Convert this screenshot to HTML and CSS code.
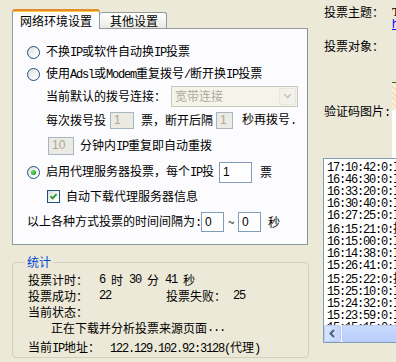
FILE: index.html
```html
<!DOCTYPE html>
<html lang="zh-CN">
<head>
<meta charset="utf-8">
<title>投票设置</title>
<link rel="stylesheet" href="styles.css">
</head>
<body>
<div class="app">
  <div class="left">
    <div class="tabs">
      <div class="tab active">网络环境设置</div>
      <div class="tab">其他设置</div>
    </div>
    <div class="panel">
      <div class="row r1"><span class="radio"></span><span class="lbl">不换<span class="en">IP</span>或软件自动换<span class="en">IP</span>投票</span></div>
      <div class="row r2"><span class="radio"></span><span class="lbl">使用<span class="en">Adsl</span>或<span class="en">Modem</span>重复拨号<span class="en">/</span>断开换<span class="en">IP</span>投票</span></div>
      <div class="row r3 ind"><span>当前默认的拨号连接：</span>
        <div class="select dis"><span class="sel-text">宽带连接</span><span class="sel-btn"><svg width="9" height="6" viewBox="0 0 9 6"><path d="M1 1 L4.5 4.5 L8 1" fill="none" stroke="#C9C7BA" stroke-width="1.6"/></svg></span></div>
      </div>
      <div class="row r4 ind"><span>每次拨号投</span><span class="inp dis w24">1</span><span class="t1">票，断开后隔</span><span class="inp dis w17">1</span><span class="t2">秒再拨号<span class="en">.</span></span></div>
      <div class="row r5"><span class="inp dis w26 h18">10</span><span class="t3">分钟内<span class="en">IP</span>重复即自动重拨</span></div>
      <div class="row r6"><span class="radio on"></span><span class="lbl">启用代理服务器投票，每个<span class="en">IP</span>投</span><span class="inp w33 h21">1</span><span class="t4">票</span></div>
      <div class="row r7"><span class="check"><svg width="11" height="11" viewBox="0 0 11 11"><path d="M2.5 5.2 L4.6 7.4 L8.6 3.2" fill="none" stroke="#21A121" stroke-width="1.9"/></svg></span><span class="lbl2">自动下载代理服务器信息</span></div>
      <div class="row r8"><span>以上各种方式投票的时间间隔为<span class="en">:</span></span><span class="inp w23 h20">0</span><span class="tilde">~</span><span class="inp w23 h20">0</span><span class="t5">秒</span></div>
    </div>
    <fieldset class="group">
      <legend>统计</legend>
      <div class="srow"><span class="sl">投票计时：</span><span class="sv timer"><span class="en">6</span><span>时</span><span class="en">30</span><span>分</span><span class="en">41</span><span>秒</span></span></div>
      <div class="srow"><span class="sl">投票成功：</span><span class="sv n1 en">22</span><span class="sl fail">投票失败：</span><span class="n2 en">25</span></div>
      <div class="srow"><span class="sl">当前状态：</span></div>
      <div class="srow status">正在下载并分析投票来源页面<span class="en">...</span></div>
      <div class="srow ip"><span class="sl ipl">当前<span class="en">IP</span>地址：</span><span class="ipv"><span class="en">122.129.102.92:3128(</span>代理<span class="en">)</span></span></div>
    </fieldset>
  </div>
  <div class="right">
    <div class="field subject">
      <span class="rl">投票主题：</span>
      <div class="rv"><div class="title">T</div><a class="link" href="#">h</a></div>
    </div>
    <div class="field target"><span class="rl">投票对象：</span></div>
    <div class="field captcha">
      <span class="rl cl">验证码图片<span class="en">:</span></span>
      <div class="cap"><div class="cap-img"></div><div class="cap-white"></div></div>
    </div>
    <div class="log">
      <div class="log-lines">
        <div>17:10:42:0:I</div>
        <div>16:46:30:0:I</div>
        <div>16:33:20:0:I</div>
        <div>16:30:40:0:I</div>
        <div>16:27:25:0:I</div>
        <div>16:15:21:0:<span class="cj">投</span></div>
        <div>16:15:00:0:I</div>
        <div>16:14:38:0:I</div>
        <div>15:26:41:0:I</div>
        <div>15:25:22:0:<span class="cj">投</span></div>
        <div>15:25:10:0:I</div>
        <div>15:24:32:0:I</div>
        <div>15:23:59:0:I</div>
        <div>15:15:15:0:I</div>
      </div>
      <div class="hscroll">
        <span class="sbtn"><svg width="9" height="9" viewBox="0 0 9 9"><path d="M6 1 L2.5 4.5 L6 8" fill="none" stroke="#4D6185" stroke-width="2"/></svg></span>
        <span class="thumb"></span>
      </div>
    </div>
  </div>
</div>
</body>
</html>
```
FILE: styles.css
```css
html, body {
  margin: 0;
  padding: 0;
}
body {
  width: 396px;
  height: 362px;
  overflow: hidden;
  background: #ECE9D8;
  font-family: "Noto Sans CJK SC", sans-serif;
  font-size: 12px;
  line-height: 16px;
  color: #000;
}
.en {
  font-family: "Liberation Mono", monospace;
  letter-spacing: -1.2px;
}
.app {
  display: flex;
  height: 362px;
}
.left {
  flex: none;
  width: 309px;
  box-sizing: border-box;
  padding: 9px 0 0 12px;
}
.tabs {
  display: flex;
  align-items: flex-end;
  height: 19px;
  position: relative;
  z-index: 1;
}
.tab {
  box-sizing: border-box;
  height: 16px;
  width: 67px;
  padding-left: 10px;
  line-height: 16px;
  border: 1px solid #919B9C;
  border-bottom: none;
  border-left: none;
  border-radius: 3px 3px 0 0;
  background: linear-gradient(#FFFFFF, #F3F3EF 60%, #E9E8E2);
}
.tab.active {
  width: 88px;
  height: 20px;
  margin-bottom: -1px;
  padding-left: 7px;
  line-height: 19px;
  border-left: 1px solid #919B9C;
  border-top: 2px solid #E68B2C;
  box-shadow: inset 0 1px 0 #FFC83C;
  background: #FCFCFE;
}
.panel {
  box-sizing: border-box;
  width: 296px;
  height: 217px;
  border: 1px solid #919B9C;
  border-right-color: #8A9394;
  background: #FCFCFE;
  padding-top: 12px;
}
.row {
  display: flex;
  align-items: center;
  height: 22px;
  padding-left: 14px;
  white-space: nowrap;
}
.row.ind { padding-left: 33px; }
.r4 { margin-top: 2px; }
.r5 { margin-top: 4px; padding-left: 35px; }
.r6 { margin-top: 4px; }
.r7 { margin-top: 2px; padding-left: 34px; }
.r8 { margin-top: 4px; }

.radio {
  flex: none;
  box-sizing: border-box;
  width: 13px;
  height: 13px;
  border-radius: 50%;
  border: 1px solid #1C5180;
  background: linear-gradient(135deg, #DCDCD7, #FFFFFF 80%);
  display: flex;
  align-items: center;
  justify-content: center;
}
.radio.on::after {
  content: "";
  width: 5px;
  height: 5px;
  border-radius: 50%;
  background: radial-gradient(circle at 35% 35%, #7CDF7C, #21A121 70%);
}
.lbl { margin-left: 6px; }
.check {
  flex: none;
  box-sizing: border-box;
  width: 13px;
  height: 13px;
  border: 1px solid #1C5180;
  background: linear-gradient(135deg, #DCDCD7, #FFFFFF 80%);
  display: flex;
  align-items: center;
  justify-content: center;
}
.lbl2 { margin-left: 6px; }

.inp {
  flex: none;
  box-sizing: border-box;
  height: 17px;
  border: 1px solid #7F9DB9;
  background: #FFFFFF;
  padding-left: 3px;
  line-height: 15px;
  font-family: "Liberation Sans", sans-serif;
  font-size: 12px;
}
.inp.dis {
  background: #EBEAE3;
  color: #ACA899;
  border-color: #A7B5C4;
}
.w24 { width: 24px; margin-left: 4px; }
.w17 { width: 17px; margin-left: 3px; }
.w26 { width: 26px; }
.w33 { width: 33px; margin-left: 5px; line-height: 19px; }
.w23 { width: 23px; line-height: 18px; }
.h18 { height: 18px; }
.h20 { height: 20px; }
.h21 { height: 21px; }
.t1 { margin-left: 7px; }
.t2 { margin-left: 9px; }
.t3 { margin-left: 6px; }
.t4 { margin-left: 8px; }
.r8 .inp:first-of-type { margin-left: 4px; }
.tilde { width: 14px; text-align: center; }
.t5 { margin-left: 7px; }

.select {
  flex: none;
  box-sizing: border-box;
  width: 127px;
  height: 21px;
  margin-left: 5px;
  border: 1px solid #C9C7BA;
  background: #F5F4EA;
  display: flex;
  align-items: center;
  justify-content: space-between;
  padding: 1px;
}
.sel-text {
  color: #ACA899;
  padding-left: 2px;
}
.sel-btn {
  box-sizing: border-box;
  width: 17px;
  height: 17px;
  border: 1px solid #E8E6DC;
  border-radius: 2px;
  background: #F2F1EB;
  display: flex;
  align-items: center;
  justify-content: center;
}

.group {
  box-sizing: border-box;
  width: 297px;
  margin: 9px 0 0 0;
  padding: 2px 0 2px 15px;
  border: 1px solid #D0D0BF;
  border-radius: 4px;
  min-width: 0;
}
.group legend {
  padding: 0 2px;
  margin-left: -3px;
  color: #0046D5;
  line-height: 16px;
}
.srow {
  display: flex;
  height: 16px;
  line-height: 16px;
  white-space: nowrap;
}
.sl { width: 71px; flex: none; }
.timer {
  display: flex;
  gap: 6px;
}
.n1 { width: 67px; }
.fail { width: 67px; }
.status { padding-left: 23px; }
.ip { margin-top: 3px; }
.ipl { width: 82px; }

.right {
  flex: 1;
  min-width: 0;
  padding-left: 15px;
}
.field {
  display: flex;
  white-space: nowrap;
}
.rl { width: 68px; flex: none; }
.subject { margin-top: 4px; height: 28px; }
.title {
  font-family: "Liberation Serif", serif;
  font-weight: bold;
  font-size: 13px;
  line-height: 12px;
  margin-top: 2px;
}
.link {
  display: block;
  color: #0000FF;
  line-height: 13px;
  font-family: "Liberation Sans", sans-serif;
}
.target { margin-top: 6px; }
.captcha { margin-top: 28px; height: 76px; }
.cl { margin-top: 21px; }
.cap { width: 40px; }
.cap-img {
  height: 27px;
  border-top: 1px solid #3A6B1E;
  background: repeating-linear-gradient(45deg, #F4E2BE 0 2px, #FBF1DC 2px 4px);
}
.cap-white {
  height: 48px;
  background: #FFFFFF;
}
.log {
  box-sizing: border-box;
  width: 200px;
  height: 185px;
  margin-left: -1px;
  border: 1px solid #7F9DB9;
  background: #FFFFFF;
  display: flex;
  flex-direction: column;
}
.log-lines {
  height: 166px;
  overflow: hidden;
  padding: 3px 0 0 3px;
  box-sizing: border-box;
  font-family: "Liberation Mono", monospace;
  font-size: 12px;
  letter-spacing: -1.2px;
  line-height: 12px;
  white-space: nowrap;
}
.cj {
  font-family: "Noto Sans CJK SC", sans-serif;
  letter-spacing: 0;
  line-height: 12px;
}
.hscroll {
  height: 17px;
  display: flex;
  background: #F7F7F1;
}
.sbtn {
  box-sizing: border-box;
  width: 17px;
  height: 17px;
  border: 1px solid #B9CBF3;
  border-radius: 2px;
  background: linear-gradient(90deg, #D8E5FE, #C3D4FD);
  display: flex;
  align-items: center;
  justify-content: center;
}
.thumb {
  flex: 1;
  margin-left: 1px;
  border: 1px solid #B9CBF3;
  border-radius: 2px;
  background: linear-gradient(#CADAFE, #B9CEFC);
}
```
